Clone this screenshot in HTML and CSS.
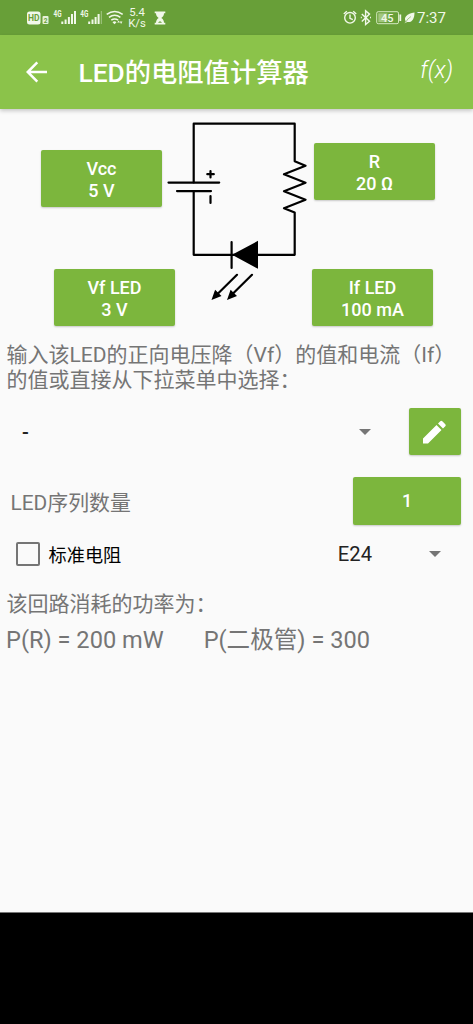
FILE: index.html
```html
<!DOCTYPE html>
<html lang="zh-CN">
<head>
<meta charset="utf-8">
<title>LED的电阻值计算器</title>
<link rel="stylesheet" href="styles.css">
</head>
<body>
<div class="screen">
  <div class="statusbar">
    <svg class="status-icons" width="98" height="36" viewBox="0 0 98 36">
      <rect x="0" y="11.500" width="13.500" height="13" rx="2.500" fill="#f1f8e9"/>
      <text x="1" y="21.200" class="hd">HD</text>
      <rect x="15.500" y="16" width="6" height="8" rx="1" fill="#e6f2d8"/>
      <text x="16.700" y="22.700" class="sim">2</text>
      <text x="26.500" y="17" class="net" textLength="8" lengthAdjust="spacingAndGlyphs">4G</text>
      <g fill="#f1f8e9"><path d="M34.300 21.500h2v2.500h-2zM37.600 19.500h2v4.500h-2zM40.900 17h2v7h-2zM44 14h2v10h-2zM47 11h2v13h-2z"/></g>
      <text x="53.300" y="17" class="net" textLength="8" lengthAdjust="spacingAndGlyphs">4G</text>
      <g fill="#f1f8e9"><path d="M61.200 21.500h2v2.500h-2zM64.500 19.500h2v4.500h-2zM67.600 17h2v7h-2zM70.600 14h2v10h-2z"/><path d="M73.800 11h1v13h-1z" opacity=".45"/></g>
      <g fill="none" stroke="#f1f8e9" stroke-width="1.600"><path d="M79.700 14.300q8-5.500 16 0M82 17.300q5.700-4 11.400 0M84.300 20.200q3.400-2.500 6.800 0"/></g>
      <path d="M85.500 22.200q2-1.800 4 0l-2 2zM90.200 22.500l1.400-2 1.400 2zM92.800 21.500h2.600l-1.300 2.500z" fill="#f1f8e9"/>
    </svg>
    <div class="speed"><span>5.4</span><span>K/s</span></div>
    <svg class="hourglass" width="12" height="14" viewBox="0 0 12 14"><path d="M.7.500h10.600v1.800H10c0 2-1 3.600-2.700 4.700C9 8 10 9.700 10 11.700h1.300v1.800H.7v-1.800H2C2 9.700 3 8 4.700 7 3 5.900 2 4.300 2 2.300H.7z" fill="#f1f8e9"/><path d="M4 11.700q2-3 4 0z" fill="#689f38"/></svg>
    <svg class="right-icons" width="74" height="36" viewBox="0 0 74 36">
      <g fill="none" stroke="#f1f8e9" stroke-width="1.400"><circle cx="7" cy="17.800" r="5.300"/><path d="M7 14.500v3.800l2.800 1.300M.8 14l3-2.700M13.200 14l-3-2.700"/><path d="M18.800 14l7.700 7.300-3.900 3.200V10.800l3.900 3.300-7.700 7.300M17.800 17.500h1M27 17.500h1"/></g>
      <rect x="33.700" y="11.700" width="21.800" height="12" rx="1.500" fill="none" stroke="#d5e8c0"/>
      <rect x="35.300" y="13.300" width="9" height="8.800" fill="#a3c77e"/>
      <path d="M57.300 14.500v6.500" stroke="#f1f8e9" stroke-width="1.800"/>
      <text x="38" y="21.900" class="battery">45</text>
      <path d="M61.500 23.200l1.300-1.800c-2.500-4 1-8 8.700-9 0 6.300-2.500 10.500-7.300 9.500z" fill="#f1f8e9"/>
      <path d="M62.500 22.500q2-4 5.500-6" stroke="#8ab367" stroke-width=".7" fill="none"/>
    </svg>
    <span class="clock">7:37</span>
  </div>
  <header class="appbar">
    <svg class="back" width="22" height="22" viewBox="0 0 22 22"><path d="M21 11H2M11.300 1.300L1.700 11l9.600 9.700" fill="none" stroke="#fff" stroke-width="2.500"/></svg>
    <h1>LED的电阻值计算器</h1>
    <span class="formula">f(x)</span>
  </header>
  <main>
    <section class="circuit">
      <svg class="schematic" width="160" height="190" viewBox="0 0 160 190">
        <g fill="none" stroke="#000" stroke-width="2.200" stroke-linecap="round" stroke-linejoin="round">
          <path d="M33.700 67.500V8.700H134.700V46.300L145.500 50.800 124 59.300 145.500 67.700 124 76.200 145.500 84.700 124 93.200 134.700 97.500V139.800H33.700V76"/>
          <path d="M8.500 67.600h50.700M17 76.100h34M47.300 59.200h6.500M50.500 56v6.500M50.500 81v7M71.600 127v26M77 159.800L57 179.500M92 159.800L72 179.500"/>
        </g>
        <path d="M72 139.800l26-14v28zM51.500 185l3.600-10.300 6.400 6.400zM67 185l3.600-10.300 6.400 6.400z"/>
      </svg>
      <div class="params">
        <div class="param-row top">
          <button class="btn param supply">Vcc<br>5 V</button>
          <button class="btn param resistor">R<br>20 Ω</button>
        </div>
        <div class="param-row bottom">
          <button class="btn param">Vf LED<br>3 V</button>
          <button class="btn param">If LED<br>100 mA</button>
        </div>
      </div>
    </section>
    <p class="hint">输入该LED的正向电压降（Vf）的值和电流（If）<br>的值或直接从下拉菜单中选择：</p>
    <div class="select-row">
      <div class="led-select"><span>-</span><i class="caret"></i></div>
      <button class="btn edit"><svg width="26" height="26" viewBox="0 0 26 26"><path d="M1 19.600L14.500 6.100l5 5L6 24.600H1zM16 4.600l2.300-2.300q1-1 2 0l3 3q1 1 0 2L21 9.600z" fill="#fff"/></svg></button>
    </div>
    <div class="count-row">
      <span>LED序列数量</span>
      <button class="btn count">1</button>
    </div>
    <div class="standard-row">
      <i class="checkbox"></i>
      <span class="check-label">标准电阻</span>
      <span class="series">E24</span>
      <i class="caret"></i>
    </div>
    <p class="power-title">该回路消耗的功率为：</p>
    <div class="power"><span>P(R) = 200 mW</span><span>P(二极管) = 300</span></div>
  </main>
  <div class="navbar"></div>
</div>
</body>
</html>
```
FILE: styles.css
```css
* { box-sizing: border-box; }
body {
  margin: 0;
  font-family: Roboto, "Noto Sans CJK SC", sans-serif;
  background: #000;
}
h1, p { margin: 0; font-weight: 400; }
.screen { display: flex; flex-direction: column; width: 473px; height: 1024px; overflow: hidden; }
svg { display: block; flex: none; }

.statusbar { display: flex; align-items: center; height: 35px; padding-left: 27px; background: #689f38; color: #f1f8e9; flex: none; }
.hd { font: 700 8.5px Roboto, sans-serif; fill: #689f38; }
.sim { font: 700 6.5px Roboto, sans-serif; fill: #689f38; }
.net { font: 700 8.5px Roboto, sans-serif; fill: #f1f8e9; }
.battery { font: 500 11px Roboto, sans-serif; fill: #f1f8e9; }
.speed { display: flex; flex-direction: column; align-items: center; width: 20px; margin-left: 2px; padding-top: 1px; font-size: 11.3px; line-height: 11.5px; }
.hourglass { margin-left: 7px; }
.right-icons { margin-left: 177px; }
.clock { font-size: 15px; line-height: 18px; margin-left: 0; padding-top: 1px; }

.appbar { display: flex; align-items: center; height: 74px; padding: 0 20px 0 26px; background: #8bc34a; color: #fff; flex: none; box-shadow: 0 2px 4px rgba(0, 0, 0, .2); z-index: 1; }
.appbar h1 { margin-left: 30.5px; padding-top: 2px; font-size: 26.3px; font-weight: 500; line-height: 38px; white-space: nowrap; }
.formula { margin-left: auto; font-size: 23px; font-style: italic; font-weight: 300; padding-bottom: 3px; }

main { height: 803px; background: #fafafa; flex: none; }
.circuit { display: grid; height: 234px; }
.schematic { grid-area: 1 / 1; margin: 6px 0 0 160px; }
.params { grid-area: 1 / 1; display: flex; flex-direction: column; }
.param-row { display: flex; justify-content: space-between; }
.top { padding: 34px 38px 0 41px; }
.bottom { padding: 62px 40px 0 54px; }
.supply { margin-top: 7px; }
.resistor { margin-bottom: 7px; }
.btn {
  display: flex; align-items: center; justify-content: center;
  border: 0; padding: 0; border-radius: 2px; background: #7cb63d; color: #fff;
  font-family: Roboto, "Noto Sans CJK SC", sans-serif; font-weight: 500; font-size: 18px; line-height: 21.5px;
  box-shadow: 0 1px 2px rgba(0, 0, 0, .2);
}
.param { width: 121px; height: 57px; padding-top: 2px; text-align: center; }

.hint { padding-left: 6.5px; font-size: 21px; line-height: 25px; color: #757575; white-space: nowrap; }
.select-row { display: flex; align-items: center; justify-content: space-between; margin-top: 15px; padding: 0 12px 0 22px; }
.led-select { display: flex; align-items: center; justify-content: space-between; width: 349px; font-size: 20px; font-weight: 500; color: #222; }
.caret { width: 0; height: 0; border: 6.5px solid transparent; border-top: 6.5px solid #757575; border-bottom: 0; }
.edit { width: 52px; height: 47px; }
.count-row { display: flex; align-items: center; justify-content: space-between; margin-top: 22px; padding: 0 12px 0 10.5px; font-size: 20.9px; color: #757575; }
.count { width: 108px; height: 48px; }
.standard-row { display: flex; align-items: center; height: 30px; margin-top: 14px; padding: 0 32px 0 16px; }
.checkbox { width: 24px; height: 24px; border: 2px solid #757575; border-radius: 2px; }
.check-label { margin-left: 8.5px; font-size: 18.2px; color: #000; }
.series { margin-left: auto; margin-right: 57px; font-size: 20.2px; color: #222; }
.power-title { margin-top: 20px; padding-left: 6.5px; font-size: 21px; line-height: 30px; color: #757575; }
.power { display: flex; gap: 40px; padding-left: 6px; margin-top: 3px; font-size: 23.6px; line-height: 36px; color: #757575; white-space: nowrap; }
.navbar { flex: 1; background: #000; border-top: 1px solid #777; }
```
